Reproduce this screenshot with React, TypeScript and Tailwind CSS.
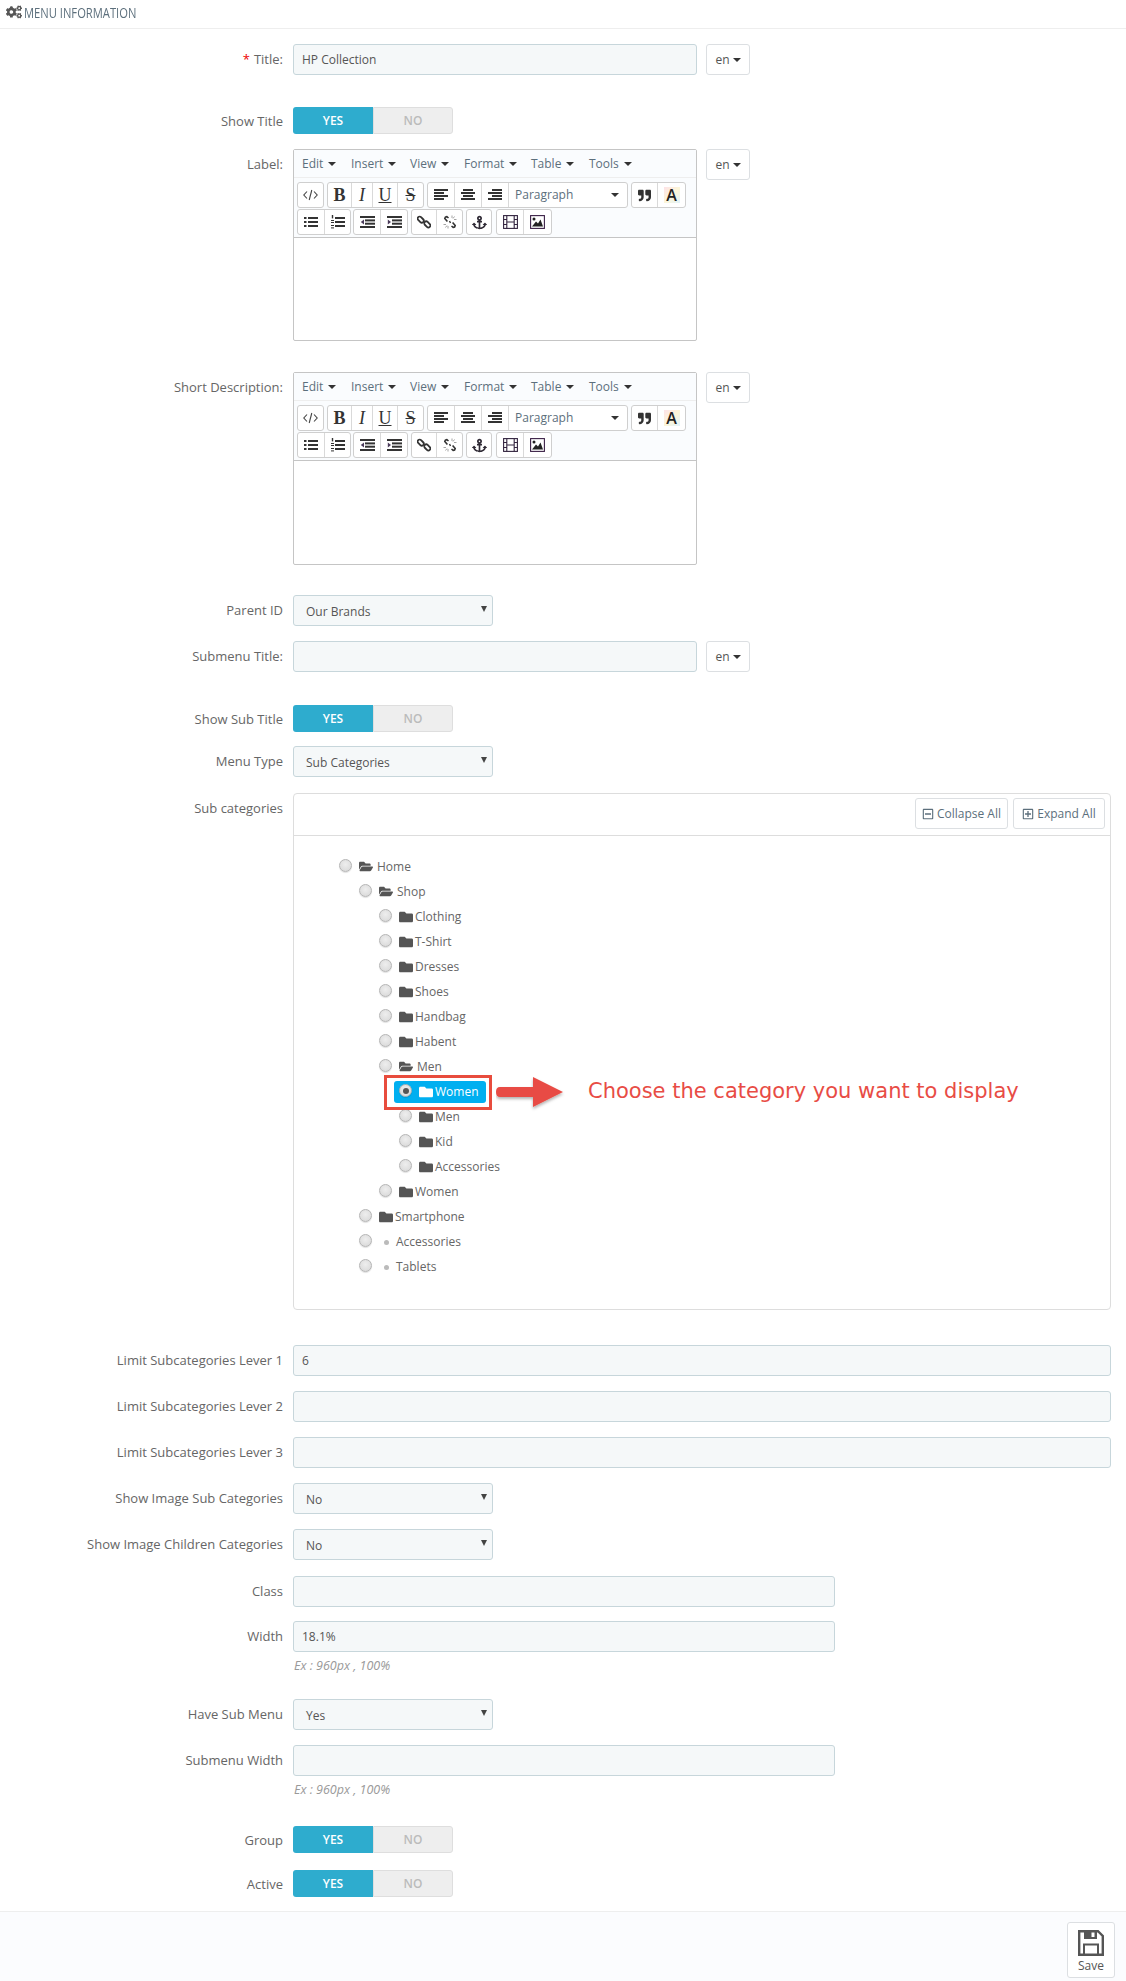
import React from "react";
import { FaCogs, FaFolder, FaFolderOpen, FaRegMinusSquare, FaRegPlusSquare, FaAnchor, FaQuoteRight } from "react-icons/fa";

const Caret = () => <span className="inline-block w-0 h-0 border-x-[4px] border-x-transparent border-t-[4px] border-t-[#333]" />;

const Row = ({ label, req, mb, lt, children }: { label?: string; req?: boolean; mb: string; lt?: string; children: React.ReactNode }) => (
  <div className={`flex items-start ${mb}`}>
    <div className={`w-[283px] shrink-0 text-right ${lt ?? "pt-[7px]"} leading-[17px] text-[13px] text-[#666]`}>
      {req && <span className="text-[#e00] mr-[4px]">*</span>}
      {label}
    </div>
    <div className="ml-[10px] flex-1 min-w-0 flex items-start">{children}</div>
  </div>
);

const Input = ({ value, w }: { value?: string; w: string }) => (
  <div className={`${w} h-[31px] shrink-0 rounded-[3px] border border-[#c7d6db] bg-[#f5f8f9] px-[8px] leading-[29px] text-[#555]`}>{value}</div>
);

const Lang = () => (
  <div className="ml-[9px] w-[44px] h-[31px] rounded-[3px] border border-[#dcdfe2] bg-white flex items-center justify-center gap-[3px] text-[#555]">
    en <Caret />
  </div>
);

const Select = ({ value }: { value: string }) => (
  <div className="relative w-[200px] h-[31px] rounded-[3px] border border-[#c7d6db] bg-[#f5f8f9] pl-[12px] leading-[31px] text-[#555]">
    {value}
    <span className="absolute right-[5px] top-[10px] w-0 h-0 border-x-[3px] border-x-transparent border-t-[6px] border-t-[#444]" />
  </div>
);

const Toggle = () => (
  <div className="w-[160px] h-[27px] flex rounded-[3px] text-[12px] font-semibold">
    <div className="w-[80px] bg-[#2eacce] text-white rounded-l-[3px] text-center leading-[27px]">YES</div>
    <div className="w-[80px] bg-[#eeeeee] text-[#bbbbbb] rounded-r-[3px] border border-[#dedede] text-center leading-[25px]">NO</div>
  </div>
);

const Tb = ({ w, children, last }: { w: string; children: React.ReactNode; last?: boolean }) => (
  <div className={`${w} h-full flex items-center justify-center text-[#333] ${last ? "" : "border-r border-[#d9d9d9]"}`}>{children}</div>
);
const Grp = ({ children, cls }: { children: React.ReactNode; cls?: string }) => (
  <div className={`h-[26px] flex rounded-[3px] border border-[#cfcfcf] bg-white ${cls ?? ""}`}>{children}</div>
);

const serif = "font-['Liberation_Serif',serif] text-[18px] leading-none text-[#333]";
const D = "#333";

const Bars = ({ rows }: { rows: [number, number][] }) => (
  <svg width="14" height="12" viewBox="0 0 14 12">
    {rows.map(([x, w], i) => <rect key={i} x={x} y={i * 3} width={w} height="2" fill={D} />)}
  </svg>
);
const IconCode = () => (
  <svg width="15" height="12" viewBox="0 0 15 12" fill="none" stroke="#444" strokeWidth="1.1">
    <path d="M4 2.5 L0.8 6 L4 9.5" /><path d="M11 2.5 L14.2 6 L11 9.5" /><path d="M8.8 1 L6.2 11" />
  </svg>
);
const IconUl = () => (
  <svg width="14" height="12" viewBox="0 0 14 12" fill={D}>
    <rect x="0" y="1" width="2.5" height="2" /><rect x="0" y="5" width="2.5" height="2" /><rect x="0" y="9" width="2.5" height="2" />
    <rect x="4" y="1" width="10" height="2" /><rect x="4" y="5" width="10" height="2" /><rect x="4" y="9" width="10" height="2" />
  </svg>
);
const IconOl = () => (
  <svg width="14" height="14" viewBox="0 0 14 14" fill={D}>
    <rect x="0.8" y="0" width="1.4" height="3.4" /><rect x="0" y="5" width="3" height="1" /><rect x="0" y="7" width="3" height="1" />
    <rect x="0" y="10" width="3" height="1" /><rect x="0" y="12.4" width="3" height="1" />
    <rect x="4" y="2" width="10" height="2" /><rect x="4" y="6" width="10" height="2" /><rect x="4" y="10" width="10" height="2" />
  </svg>
);
const IconIndent = ({ out }: { out?: boolean }) => (
  <svg width="15" height="12" viewBox="0 0 15 12" fill={D}>
    <rect x="0" y="0" width="15" height="2" /><rect x="5" y="3.4" width="10" height="2" /><rect x="5" y="6.7" width="10" height="2" /><rect x="0" y="10" width="15" height="2" />
    <path d={out ? "M4 3.5 L0.8 6 L4 8.5 Z" : "M0.8 3.5 L4 6 L0.8 8.5 Z"} fill="#4a3a5a" />
  </svg>
);
const IconLink = () => (
  <svg width="14" height="14" viewBox="0 0 14 14" fill="none" stroke={D} strokeWidth="1.8">
    <rect x="0.2" y="2.6" width="7" height="4" rx="2" transform="rotate(45 3.7 4.6)" />
    <rect x="6.8" y="7.4" width="7" height="4" rx="2" transform="rotate(45 10.3 9.4)" />
  </svg>
);
const IconUnlink = () => (
  <svg width="14" height="14" viewBox="0 0 14 14" fill="none">
    <path d="M5.5 3 L3.8 1.6 Q2 1.6 1.8 3.4 L4.4 6.4" stroke={D} strokeWidth="1.6" />
    <path d="M8.5 11 L10.2 12.4 Q12 12.4 12.2 10.6 L9.6 7.6" stroke={D} strokeWidth="1.6" />
    <path d="M6.5 6 L7.5 8" stroke={D} strokeWidth="1.4" />
    <path d="M9 0.5V3M11.5 1.5L10 3.5M13.5 4.5H11M0.5 9.5H3M2.5 12.5L4 10.5M5 13.5V11" stroke="#999" strokeWidth="0.9" />
  </svg>
);
const IconFilm = () => (
  <svg width="15" height="14" viewBox="0 0 15 14" fill="none" stroke="#33243f" strokeWidth="1.1">
    <rect x="0.6" y="0.6" width="13.8" height="12.8" />
    <path d="M3.8 0.6V13.4M11.2 0.6V13.4M0.6 4.5H3.8M0.6 9.5H3.8M11.2 4.5H14.4M11.2 9.5H14.4M3.8 7H11.2" />
  </svg>
);
const IconImage = () => (
  <svg width="15" height="14" viewBox="0 0 15 14">
    <rect x="0.6" y="0.6" width="13.8" height="12.8" fill="white" stroke="#3a2046" strokeWidth="1.1" />
    <circle cx="4" cy="4" r="1.5" fill="#222" />
    <path d="M2 11.5 L6 6.5 L8 8.5 L10.5 4.5 L13 11.5 Z" fill="#222" />
  </svg>
);
const IconSave = () => (
  <svg width="26" height="26" viewBox="0 0 26 26">
    <path d="M1.2 1.2 H20 L24.8 6 V24.8 H1.2 Z" fill="none" stroke="#555" strokeWidth="2.4" />
    <rect x="6" y="1" width="13" height="8" fill="#555" />
    <rect x="13.5" y="2.5" width="3" height="4.5" fill="white" />
    <rect x="6" y="14.5" width="14" height="10" fill="white" stroke="#555" strokeWidth="2" />
  </svg>
);

const Editor = ({ h }: { h: string }) => (
  <div className={`w-[404px] ${h} shrink-0 rounded-[2px] border border-[#c5c5c5] bg-white flex flex-col`}>
    <div className="h-[28px] bg-[#fafcfe] border-b border-[#eeeeee] flex items-center pl-[8px] text-[#5c6f7c] shrink-0">
      {[["Edit", "w-[49px]"], ["Insert", "w-[59px]"], ["View", "w-[54px]"], ["Format", "w-[67px]"], ["Table", "w-[58px]"], ["Tools", "w-[50px]"]].map(([t, w]) => (
        <div key={t} className={`${w} flex items-center gap-[5px]`}>{t}<Caret /></div>
      ))}
    </div>
    <div className="bg-[#fafcfe] border-b border-[#c5c5c5] px-[3px] pt-[4px] h-[60px] shrink-0 flex flex-col gap-[1px]">
      <div className="flex gap-[3px]">
        <Grp><Tb w="w-[25px]" last><IconCode /></Tb></Grp>
        <Grp>
          <Tb w="w-[24px]"><b className={serif}>B</b></Tb>
          <Tb w="w-[21px]"><b className={`${serif} italic font-normal`}>I</b></Tb>
          <Tb w="w-[25px]"><span className={`${serif} underline text-[16px]`}>U</span></Tb>
          <Tb w="w-[25px]" last><span className={`${serif} line-through`}>S</span></Tb>
        </Grp>
        <Grp>
          <Tb w="w-[27px]"><Bars rows={[[0, 14], [0, 10], [0, 14], [0, 10]]} /></Tb>
          <Tb w="w-[27px]"><Bars rows={[[2, 10], [0, 14], [2, 10], [0, 14]]} /></Tb>
          <Tb w="w-[27px]"><Bars rows={[[4, 10], [0, 14], [4, 10], [0, 14]]} /></Tb>
          <div className="w-[118px] flex items-center justify-between pl-[6px] pr-[8px] text-[#5c6f7c]">Paragraph <Caret /></div>
        </Grp>
        <Grp>
          <Tb w="w-[26px]"><FaQuoteRight size={13} /></Tb>
          <Tb w="w-[27px]" last>
            <span className="w-[16px] h-[16px] flex items-center justify-center bg-[linear-gradient(135deg,#fde2e8,#fdf6d8_50%,#dff2fb)] text-[16px] font-semibold leading-none text-[#222]">A</span>
          </Tb>
        </Grp>
      </div>
      <div className="flex gap-[3px]">
        <Grp><Tb w="w-[27px]"><IconUl /></Tb><Tb w="w-[25px]" last><IconOl /></Tb></Grp>
        <Grp cls="-ml-[1px]"><Tb w="w-[27px]"><IconIndent out /></Tb><Tb w="w-[26px]" last><IconIndent /></Tb></Grp>
        <Grp><Tb w="w-[25px]"><IconLink /></Tb><Tb w="w-[25px]" last><IconUnlink /></Tb></Grp>
        <Grp><Tb w="w-[24px]" last><FaAnchor size={15} className="text-[#2f2a35]" /></Tb></Grp>
        <Grp cls="ml-[1px]"><Tb w="w-[27px]"><IconFilm /></Tb><Tb w="w-[27px]" last><IconImage /></Tb></Grp>
      </div>
    </div>
  </div>
);

const Radio = ({ on }: { on?: boolean }) => (
  <span className="w-[13px] h-[13px] rounded-full border border-[#b5b5b5] bg-[radial-gradient(circle_at_50%_40%,#eeeeee,#d6d6d6)] shadow-[0_1px_1px_rgba(0,0,0,0.12)] flex items-center justify-center shrink-0 -mt-[3px]">
    {on && <span className="w-[6px] h-[6px] rounded-full bg-[#555]" />}
  </span>
);

type Node = { t: string; lv: number; icon: "open" | "closed" | "dot" };
const tree: Node[] = [
  { t: "Home", lv: 0, icon: "open" },
  { t: "Shop", lv: 1, icon: "open" },
  { t: "Clothing", lv: 2, icon: "closed" },
  { t: "T-Shirt", lv: 2, icon: "closed" },
  { t: "Dresses", lv: 2, icon: "closed" },
  { t: "Shoes", lv: 2, icon: "closed" },
  { t: "Handbag", lv: 2, icon: "closed" },
  { t: "Habent", lv: 2, icon: "closed" },
  { t: "Men", lv: 2, icon: "open" },
];
const tree2: Node[] = [
  { t: "Men", lv: 3, icon: "closed" },
  { t: "Kid", lv: 3, icon: "closed" },
  { t: "Accessories", lv: 3, icon: "closed" },
  { t: "Women", lv: 2, icon: "closed" },
  { t: "Smartphone", lv: 1, icon: "closed" },
  { t: "Accessories", lv: 1, icon: "dot" },
  { t: "Tablets", lv: 1, icon: "dot" },
];
const pad = ["pl-[0px]", "pl-[20px]", "pl-[40px]", "pl-[60px]"];

const TreeRow = ({ n }: { n: Node }) => (
  <div className={`h-[25px] flex items-center text-[#666] ${pad[n.lv]}`}>
    <Radio />
    {n.icon === "dot" ? (
      <>
        <span className="ml-[12px] w-[5px] h-[5px] rounded-full bg-[#bbb] mt-[2px]" />
        <span className="ml-[7px]">{n.t}</span>
      </>
    ) : (
      <>
        <span className="ml-[7px] w-[14px] text-[#555] flex">{n.icon === "open" ? <FaFolderOpen size={15} /> : <FaFolder size={14} />}</span>
        <span className={n.icon === "open" ? "ml-[4px]" : "ml-[2px]"}>{n.t}</span>
      </>
    )}
  </div>
);

const Btn = ({ w, children }: { w: string; children: React.ReactNode }) => (
  <div className={`${w} h-[31px] rounded-[3px] border border-[#dcdfe2] bg-white flex items-center justify-center gap-[3px] text-[#5c6f7c]`}>{children}</div>
);

const Help = ({ mb }: { mb: string }) => (
  <div className={`ml-[293px] pl-[1px] -mt-[8px] h-[16px] leading-[16px] text-[12.5px] italic text-[#999] ${mb}`}>Ex : 960px , 100%</div>
);

export default function App() {
  return (
    <div className="w-[1126px] h-[1981px] bg-white font-['Open_Sans',sans-serif] text-[12px] text-[#555] overflow-hidden flex flex-col">
      <div className="h-[29px] shrink-0 border-b border-[#eeeeee] flex items-center pl-[6px] pb-[4px] text-[#5c6f7c] mb-[15px]">
        <FaCogs size={16} className="mr-[2px] text-[#555]" />
        <span className="inline-block origin-left scale-x-[0.8] text-[14px] whitespace-nowrap">MENU INFORMATION</span>
      </div>

      <Row label="Title:" req mb="mb-[32px]"><Input value="HP Collection" w="w-[404px]" /><Lang /></Row>
      <Row label="Show Title" lt="pt-[6px]" mb="mb-[15px]"><Toggle /></Row>
      <Row label="Label:" mb="mb-[31px]"><Editor h="h-[192px]" /><Lang /></Row>
      <Row label="Short Description:" mb="mb-[30px]"><Editor h="h-[193px]" /><Lang /></Row>
      <Row label="Parent ID" mb="mb-[15px]"><Select value="Our Brands" /></Row>
      <Row label="Submenu Title:" mb="mb-[33px]"><Input w="w-[404px]" /><Lang /></Row>
      <Row label="Show Sub Title" lt="pt-[6px]" mb="mb-[14px]"><Toggle /></Row>
      <Row label="Menu Type" mb="mb-[16px]"><Select value="Sub Categories" /></Row>
      <Row label="Sub categories" mb="mb-[35px]">
        <div className="w-[818px] h-[517px] rounded-[4px] border border-[#dddddd] bg-white flex flex-col">
          <div className="h-[42px] shrink-0 border-b border-[#dddddd] flex justify-end items-start gap-[5px] pt-[4px] pr-[5px]">
            <Btn w="w-[93px]"><FaRegMinusSquare size={12} />Collapse All</Btn>
            <Btn w="w-[92px]"><FaRegPlusSquare size={12} />Expand All</Btn>
          </div>
          <div className="pl-[45px] pt-[18px]">
            {tree.map((n, i) => <TreeRow key={i} n={n} />)}
            <div className="h-[25px] flex items-center relative">
              <div className="absolute left-[45px] -top-[4px] w-[108px] h-[35px] border-[3px] border-[#e84c3d]" />
              <div className="absolute left-[55px] top-[2px] w-[92px] h-[22px] rounded-[3px] bg-[#00aff0] flex items-center text-white pl-[5px]">
                <Radio on />
                <span className="ml-[7px] flex"><FaFolder size={14} className="text-white" /></span>
                <span className="ml-[2px]">Women</span>
              </div>
              <svg className="absolute left-[157px] -top-[4px]" width="70" height="38" viewBox="0 0 70 38">
                <defs><filter id="sh" x="-20%" y="-20%" width="140%" height="150%"><feDropShadow dx="0" dy="2" stdDeviation="1.5" floodColor="#000" floodOpacity="0.3" /></filter></defs>
                <path d="M4 12 H37 V2 L67 17 L37 32 V22 H4 Q0 22 0 17 Q0 12 4 12 Z" fill="#e84c45" filter="url(#sh)" />
              </svg>
              <span className="absolute left-[249px] -top-[2px] whitespace-nowrap text-[21px] leading-[28px] text-[#e84c45] font-['DejaVu_Sans',sans-serif]">Choose the category you want to display</span>
            </div>
            {tree2.map((n, i) => <TreeRow key={i} n={n} />)}
          </div>
        </div>
      </Row>
      <Row label="Limit Subcategories Lever 1" mb="mb-[15px]"><Input value="6" w="w-[818px]" /></Row>
      <Row label="Limit Subcategories Lever 2" mb="mb-[15px]"><Input w="w-[818px]" /></Row>
      <Row label="Limit Subcategories Lever 3" mb="mb-[15px]"><Input w="w-[818px]" /></Row>
      <Row label="Show Image Sub Categories" mb="mb-[15px]"><Select value="No" /></Row>
      <Row label="Show Image Children Categories" mb="mb-[16px]"><Select value="No" /></Row>
      <Row label="Class" mb="mb-[14px]"><Input w="w-[542px]" /></Row>
      <Row label="Width" mb="mb-[14px]"><Input value="18.1%" w="w-[542px]" /></Row>
      <Help mb="mb-[25px]" />
      <Row label="Have Sub Menu" mb="mb-[15px]"><Select value="Yes" /></Row>
      <Row label="Submenu Width" mb="mb-[14px]"><Input w="w-[542px]" /></Row>
      <Help mb="mb-[28px]" />
      <Row label="Group" lt="pt-[6px]" mb="mb-[17px]"><Toggle /></Row>
      <Row label="Active" lt="pt-[6px]" mb="mb-[14px]"><Toggle /></Row>

      <div className="flex-1 border-t border-[#eeeeee] bg-[#fbfcfe] flex justify-end items-start pt-[10px] pr-[11px]">
        <div className="w-[48px] h-[56px] rounded-[3px] border border-[#dcdfe2] bg-white flex flex-col items-center pt-[7px] text-[#555]">
          <IconSave />
          <span className="text-[12px] leading-[16px] mt-[2px]">Save</span>
        </div>
      </div>
    </div>
  );
}
